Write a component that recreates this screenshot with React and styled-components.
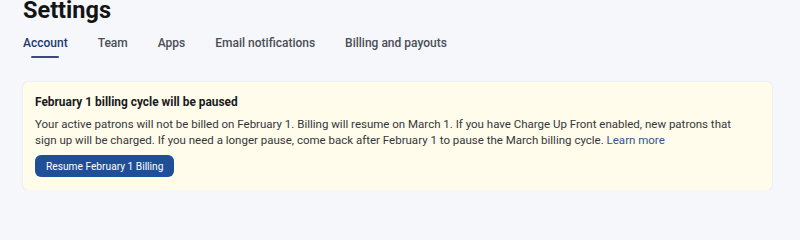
import React from "react";
import styled, { createGlobalStyle } from "styled-components";

const GlobalStyle = createGlobalStyle`
  html, body {
    margin: 0;
    padding: 0;
    background: #f5f7fa;
  }
  body {
    font-family: Roboto, "Noto Sans", sans-serif;
    color: #1f1f22;
  }
`;

const Page = styled.div`
  padding: 0 28px 0 23px;
`;

const Title = styled.h1`
  margin: -2px 0 0;
  font-size: 23.5px;
  line-height: 24px;
  font-weight: 700;
  color: #141416;
`;

const Tabs = styled.nav`
  display: flex;
  gap: 30px;
  margin-top: 12px;
`;

const Tab = styled.div`
  position: relative;
  font-size: 12px;
  font-weight: 500;
  line-height: 18px;
  padding: 0 0 6px;
  color: ${(p) => (p.$active ? "#23396b" : "#4b4d57")};
  cursor: pointer;

  &::after {
    content: "";
    display: ${(p) => (p.$active ? "block" : "none")};
    position: absolute;
    left: 8px;
    right: 9px;
    bottom: 0;
    height: 2px;
    border-radius: 1px;
    background: #3b4a78;
  }
`;

const Notice = styled.section`
  margin-top: 24px;
  background: #fffcec;
  border-radius: 5px;
  box-shadow: 0 0 2px rgba(30, 40, 60, 0.12);
  padding: 11px 24px 13px 12px;
`;

const NoticeTitle = styled.h2`
  margin: 0;
  font-size: 11.9px;
  font-weight: 700;
  line-height: 18px;
  color: #1a1a1c;
`;

const NoticeText = styled.p`
  margin: 6px 0 0;
  font-size: 11.5px;
  line-height: 15.5px;
  color: #36363a;

  a {
    color: #2e548f;
    text-decoration: none;
  }
`;

const Button = styled.button`
  display: block;
  margin-top: 7px;
  height: 22px;
  padding: 0 11px;
  border: none;
  border-radius: 6px;
  background: #1f4f99;
  color: #ffffff;
  font-family: inherit;
  font-size: 10.2px;
  font-weight: 400;
  cursor: pointer;
`;

const tabs = ["Account", "Team", "Apps", "Email notifications", "Billing and payouts"];

export default function App() {
  return (
    <>
      <GlobalStyle />
      <Page>
        <Title>Settings</Title>
        <Tabs>
          {tabs.map((t, i) => (
            <Tab key={t} $active={i === 0}>
              {t}
            </Tab>
          ))}
        </Tabs>
        <Notice>
          <NoticeTitle>February 1 billing cycle will be paused</NoticeTitle>
          <NoticeText>
            Your active patrons will not be billed on February 1. Billing will resume on March 1. If you
            have Charge Up Front enabled, new patrons that sign up will be charged. If you need a longer
            pause, come back after February 1 to pause the March billing cycle. <a href="#">Learn more</a>
          </NoticeText>
          <Button>Resume February 1 Billing</Button>
        </Notice>
      </Page>
    </>
  );
}
